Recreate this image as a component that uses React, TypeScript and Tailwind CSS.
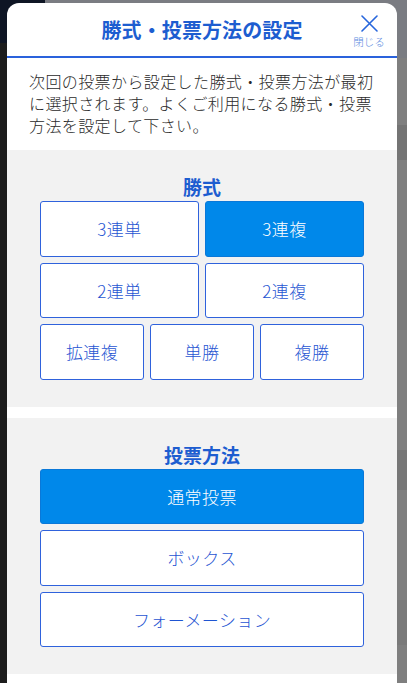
import React from "react";

const FONT = '"Noto Sans CJK JP", "Noto Sans", sans-serif';

function Btn({ label, selected }: { label: string; selected?: boolean }) {
  return (
    <button
      className={
        selected
          ? "h-[55.5px] rounded-[3px] border border-[#0a78d8] bg-[#0088ea] text-[17px] font-light text-white tracking-[0.4px]"
          : "h-[55.5px] rounded-[3px] border border-[#2f62dc] bg-white text-[17px] font-light text-[#1f55d2] tracking-[0.4px]"
      }
    >
      {label}
    </button>
  );
}

export default function App() {
  return (
    <div
      className="relative h-[683px] w-[407px] overflow-hidden bg-[#7f7f7f]"
      style={{ fontFamily: FONT }}
    >
      {/* backdrop page content */}
      <div className="absolute left-0 top-0 h-full w-[7px] bg-[#1c1c1c]" />
      <div className="absolute left-0 top-0 h-[43px] w-[45px] bg-[#0e1524]" />
      <div className="absolute left-[45px] top-0 h-[58px] w-[362px] bg-[#7a7c82]" />
      <div className="absolute right-0 top-[125px] h-[35px] w-[10px] bg-[#747474]" />
      <div className="absolute right-0 top-[270px] h-[60px] w-[10px] bg-[#7a7a7a]" />
      <div className="absolute right-0 top-[450px] h-[40px] w-[10px] bg-[#777777]" />
      <div className="absolute right-0 top-[600px] h-[45px] w-[10px] bg-[#7a7a7a]" />

      {/* modal */}
      <div className="relative z-10 ml-[7px] mt-[3px] w-[390px] rounded-t-[12px] bg-white pb-[40px]">
        <div className="relative flex h-[55px] items-center justify-center border-b-2 border-[#2a62dc]">
          <h1 className="text-[20px] font-bold tracking-[0.1px] text-[#1d5dd0]">
            勝式・投票方法の設定
          </h1>
          <div className="absolute right-[12px] top-[12px] flex w-[32px] flex-col items-center">
            <svg width="17" height="17" viewBox="0 0 17 17" fill="none">
              <path
                d="M1 1 L16 16 M16 1 L1 16"
                stroke="#2766dc"
                strokeWidth="1.6"
                strokeLinecap="round"
              />
            </svg>
            <span className="mt-[3px] text-[10.5px] font-light leading-[13px] text-[#5b8ae0]">
              閉じる
            </span>
          </div>
        </div>

        <p className="px-[22px] pb-[14px] pt-[12px] text-[16px] font-light leading-[22px] tracking-[0.4px] text-[#2a2a2a]">
          次回の投票から設定した勝式・投票方法が最初に選択されます。よくご利用になる勝式・投票方法を設定して下さい。
        </p>

        <section className="bg-[#f2f2f2] px-[33px] pb-[27px] pt-[24px]">
          <h2 className="h-[26px] text-center text-[19px] font-bold leading-[26px] text-[#1d5dd0]">
            勝式
          </h2>
          <div className="mt-[1px] flex flex-col gap-[6px]">
            <div className="grid grid-cols-2 gap-[6px]">
              <Btn label="3連単" />
              <Btn label="3連複" selected />
            </div>
            <div className="grid grid-cols-2 gap-[6px]">
              <Btn label="2連単" />
              <Btn label="2連複" />
            </div>
            <div className="grid grid-cols-3 gap-[6px]">
              <Btn label="拡連複" />
              <Btn label="単勝" />
              <Btn label="複勝" />
            </div>
          </div>
        </section>

        <section className="mt-[11px] bg-[#f2f2f2] px-[33px] pb-[27px] pt-[24px]">
          <h2 className="h-[26px] text-center text-[19px] font-bold leading-[26px] text-[#1d5dd0]">
            投票方法
          </h2>
          <div className="mt-[1px] flex flex-col gap-[6px]">
            <Btn label="通常投票" selected />
            <Btn label="ボックス" />
            <Btn label="フォーメーション" />
          </div>
        </section>
      </div>
    </div>
  );
}
